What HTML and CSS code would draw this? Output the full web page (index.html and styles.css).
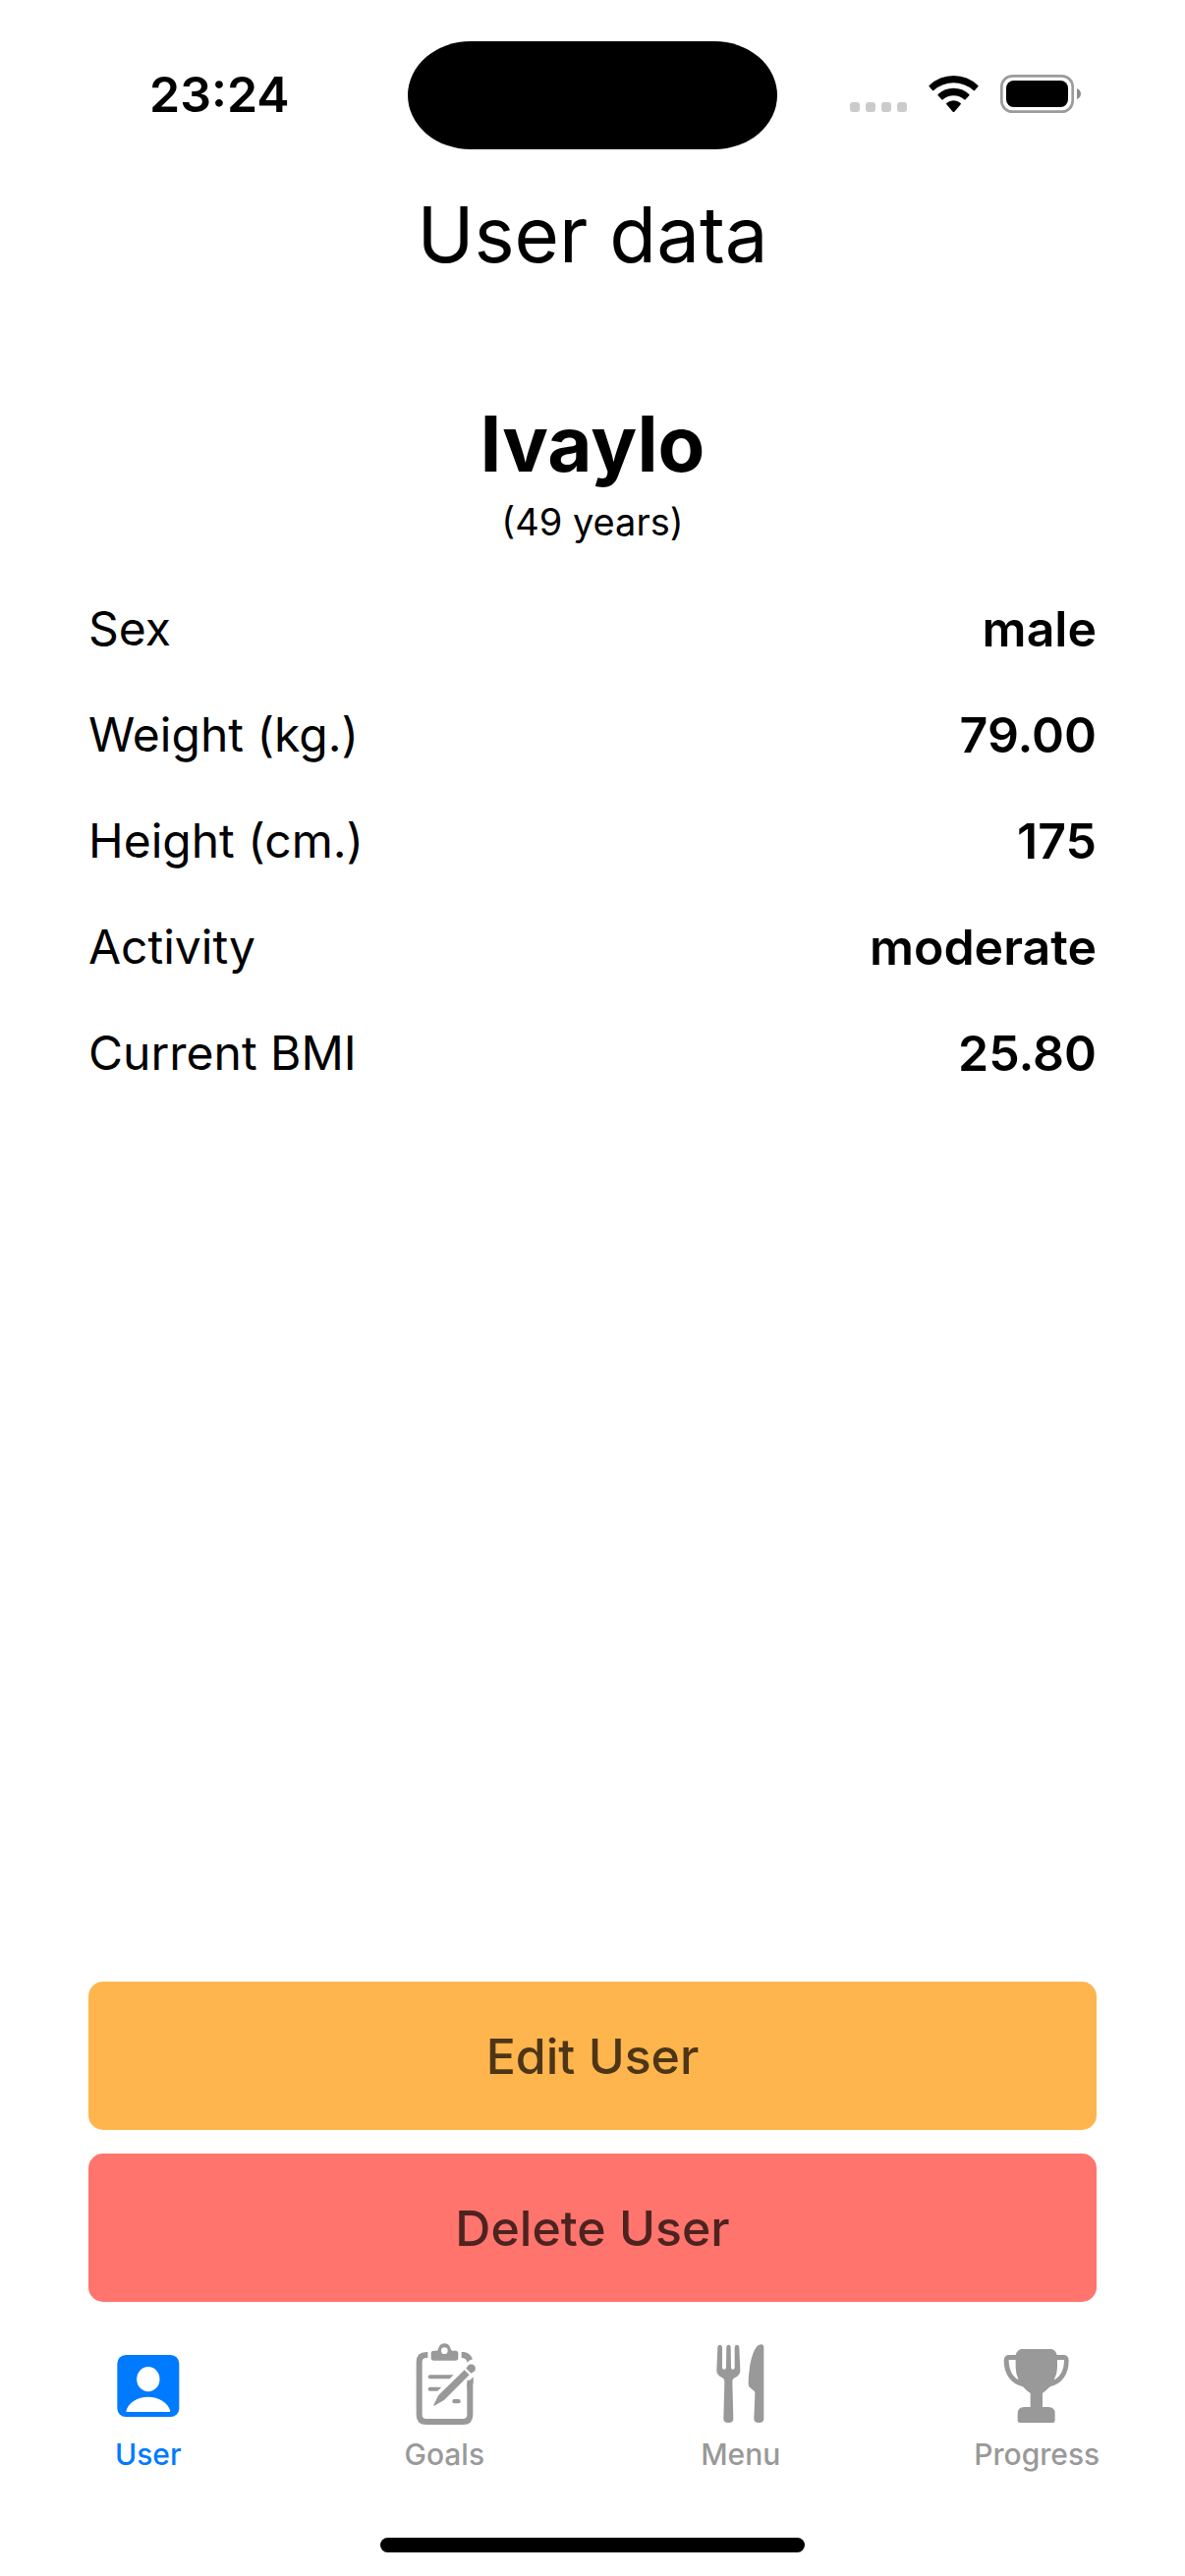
FILE: index.html
```html
<!DOCTYPE html>
<html lang="en">
<head>
<meta charset="utf-8">
<meta name="viewport" content="width=device-width, initial-scale=1">
<title>User data</title>
<link rel="stylesheet" href="styles.css">
</head>
<body class="screen">
<header class="status">
  <time class="clock">23:24</time>
  <div class="island"></div>
  <div class="indicators">
    <svg width="58" height="41" viewBox="75 45 174 123" fill="#cbcbcb" aria-hidden="true">
      <rect x="75" y="132" width="30" height="30" rx="9"/>
      <rect x="123" y="132" width="30" height="30" rx="9"/>
      <rect x="171" y="132" width="30" height="30" rx="9"/>
      <rect x="219" y="132" width="30" height="30" rx="9"/>
    </svg>
    <svg width="51" height="41" viewBox="315 45 153 123" aria-hidden="true">
      <path d="M317 81Q348 51 391.500 51T466 81Q468 83 466 85L456 96Q454 98 452 96Q425 73 391.500 73T331 96Q329 98 327 96L317 85Q315 83 317 81Z"/>
      <path d="M344 108Q364 89 391.500 89T439 108Q441 110 439 112L428 124Q426 126 424 124Q410 112 391.500 112T359 124Q357 126 355 124L344 112Q342 110 344 108Z"/>
      <path d="M370 135Q379 127 391.500 127T413 135Q415 137 413 139L394 161Q391.500 163 389 161L370 139Q368 137 370 135Z"/>
    </svg>
    <svg width="82" height="41" viewBox="534 45 246 123" aria-hidden="true">
      <rect x="538" y="52" width="217" height="109" rx="33" fill="none" stroke="#9b9b9b" stroke-width="8"/>
      <rect x="552" y="66" width="189" height="81" rx="23"/>
      <path d="M768 90Q780 95 780 106.500T768 123Z" fill="#8c8c8c"/>
    </svg>
  </div>
</header>
<main class="content">
  <h1 class="title">User data</h1>
  <h2 class="name">Ivaylo</h2>
  <p class="age">(49 years)</p>
  <dl class="facts">
    <div class="fact"><dt>Sex</dt><dd>male</dd></div>
    <div class="fact"><dt>Weight (kg.)</dt><dd>79.00</dd></div>
    <div class="fact"><dt>Height (cm.)</dt><dd>175</dd></div>
    <div class="fact"><dt>Activity</dt><dd>moderate</dd></div>
    <div class="fact"><dt>Current BMI</dt><dd>25.80</dd></div>
  </dl>
  <div class="actions">
    <button class="action action-edit" type="button">Edit User</button>
    <button class="action action-delete" type="button">Delete User</button>
  </div>
</main>
<nav class="tabs">
  <a class="tab tab-active" href="#user" aria-current="page">
    <svg width="80" height="90" viewBox="62 30 240 270" fill="currentColor" aria-hidden="true">
      <rect x="87" y="81" width="189" height="189" rx="26"/>
      <ellipse cx="181.500" cy="155" rx="35" ry="38" fill="#fff"/>
      <path d="M114 252C121 226 149 209 181 209S242 226 249 252Q249 255 246 255H117Q114 255 114 252Z" fill="#fff"/>
    </svg>
    <span>User</span>
  </a>
  <a class="tab" href="#goals">
    <svg width="80" height="90" viewBox="67 30 240 270" fill="currentColor" aria-hidden="true">
      <path d="M137 81H133Q111 81 111 103V263Q111 285 133 285H244Q266 285 266 263V158" fill="none" stroke="currentColor" stroke-width="18"/>
      <path d="M276 148V166L257 185V168Z"/>
      <path d="M240 72C256 71 269 79 274 94Q264 96 257 104C257 95 250 90 240 90Z"/>
      <path fill-rule="evenodd" d="M155 68H164C168 68 168 64 170 59C173 50 180 46 188 46S203 50 206 59C208 64 208 68 213 68H222Q230 68 230 76V90Q230 98 222 98H155Q147 98 147 90V76Q147 68 155 68ZM188 58A10 10 0 1 0 188 78A10 10 0 1 0 188 58Z"/>
      <path d="M144 142H216L204 154H144Q138 154 138 148T144 142ZM144 179H179L167 191H144Q138 191 138 185T144 179Z"/>
      <rect x="212" y="216" width="25" height="13" rx="6"/>
      <path d="M249 127L264 142L190 216Q186 220 180 223L157 236Q154 237 155 234L166 211Q168 206 172 202ZM254 122L260 113C266 107 275 109 279 113S285 126 279 131L269 137Z"/>
    </svg>
    <span>Goals</span>
  </a>
  <a class="tab" href="#menu">
    <svg width="80" height="90" viewBox="71 30 240 270" fill="currentColor" aria-hidden="true">
      <path d="M120 57Q121 50 127 50T134 57V119Q134 125 140 125T146 119L147 57Q147 50 153 50T160 57L161 119Q161 125 166.500 125T172 119V57Q173 50 179 50T186 57L189 128Q189 142 175 149Q165 153 165 162L168 275Q168 288 153 288T138 275L141 162Q141 153 132 149Q117 142 117 128Z"/>
      <path d="M253 49Q261 49 261 58V275Q261 288 246 288T231 275L234 198Q235 192 226 187Q214 179 214 170C214 118 228 49 253 49Z"/>
    </svg>
    <span>Menu</span>
  </a>
  <a class="tab" href="#progress">
    <svg width="80" height="90" viewBox="136 30 240 270" fill="currentColor" aria-hidden="true">
      <path fill-rule="evenodd" d="M209 63H302Q314 66 318 81H338Q354 81 354 98C354 137 336 168 297 178Q285 190 274 198V240H292Q312 240 312 260V281Q312 288 305 288H205Q198 288 198 281V260Q198 240 218 240H237V198Q224 190 214 178C176 168 156 137 156 98Q156 81 173 81H192Q196 66 209 63ZM171 96H192V120Q192 139 201 157C181 147 171 124 171 96ZM319 96H340C340 124 330 147 309 157Q319 139 319 120Z"/>
    </svg>
    <span>Progress</span>
  </a>
</nav>
<div class="home-bar"></div>
</body>
</html>
```
FILE: styles.css
```css
* {
  box-sizing: border-box;
  margin: 0;
}

.screen {
  display: flex;
  flex-direction: column;
  min-height: 100vh;
  background: #fff;
  color: #000;
  font-family: Inter, "Liberation Sans", sans-serif;
}

.status {
  display: grid;
  grid-template-columns: 1fr 376px 1fr;
  align-items: center;
  padding-top: 42px;
}

.clock {
  padding: 0 0 2px 152px;
  font-size: 50px;
  line-height: 60px;
  font-weight: 600;
}

.island {
  height: 110px;
  border-radius: 64px / 55px;
  background: #000;
}

.indicators {
  display: flex;
  justify-content: flex-end;
  gap: 22px;
  padding: 0 106px 4px 0;
}

.content {
  flex: 1;
  display: flex;
  flex-direction: column;
  padding: 37px 90px 0;
}

.title,
.name {
  font-size: 78px;
  line-height: 100px;
  text-align: center;
}

.title {
  font-weight: 400;
}

.name {
  margin-top: 113px;
  font-weight: 700;
}

.age {
  margin-top: 6px;
  font-size: 38px;
  line-height: 46px;
  text-align: center;
}

.facts {
  display: flex;
  flex-direction: column;
  gap: 48px;
  margin-top: 56px;
  font-size: 50px;
  line-height: 60px;
}

.fact {
  display: flex;
  align-items: center;
  justify-content: space-between;
}

.fact dt {
  font-size: 48px;
}

.fact dd {
  font-weight: 600;
}

.actions {
  display: flex;
  flex-direction: column;
  gap: 24px;
  margin-top: auto;
}

.action {
  padding: 46px 24px 45px;
  border: 0;
  border-radius: 15px;
  font: 500 50px/60px Inter, "Liberation Sans", sans-serif;
}

.action-edit {
  background: #ffb54d;
  color: #4d3617;
}

.action-delete {
  background: #ff746c;
  color: #4d2320;
}

.tabs {
  display: grid;
  grid-template-columns: repeat(4, 1fr);
  padding-top: 37px;
}

.tab {
  display: flex;
  flex-direction: column;
  align-items: center;
  gap: 10px;
  color: #999;
  font-size: 30px;
  line-height: 36px;
  font-weight: 500;
  text-decoration: none;
}

.tab-active {
  color: #007aff;
}

.home-bar {
  width: 432px;
  height: 15px;
  margin: 67px auto 24px;
  border-radius: 8px;
  background: #000;
}
```
